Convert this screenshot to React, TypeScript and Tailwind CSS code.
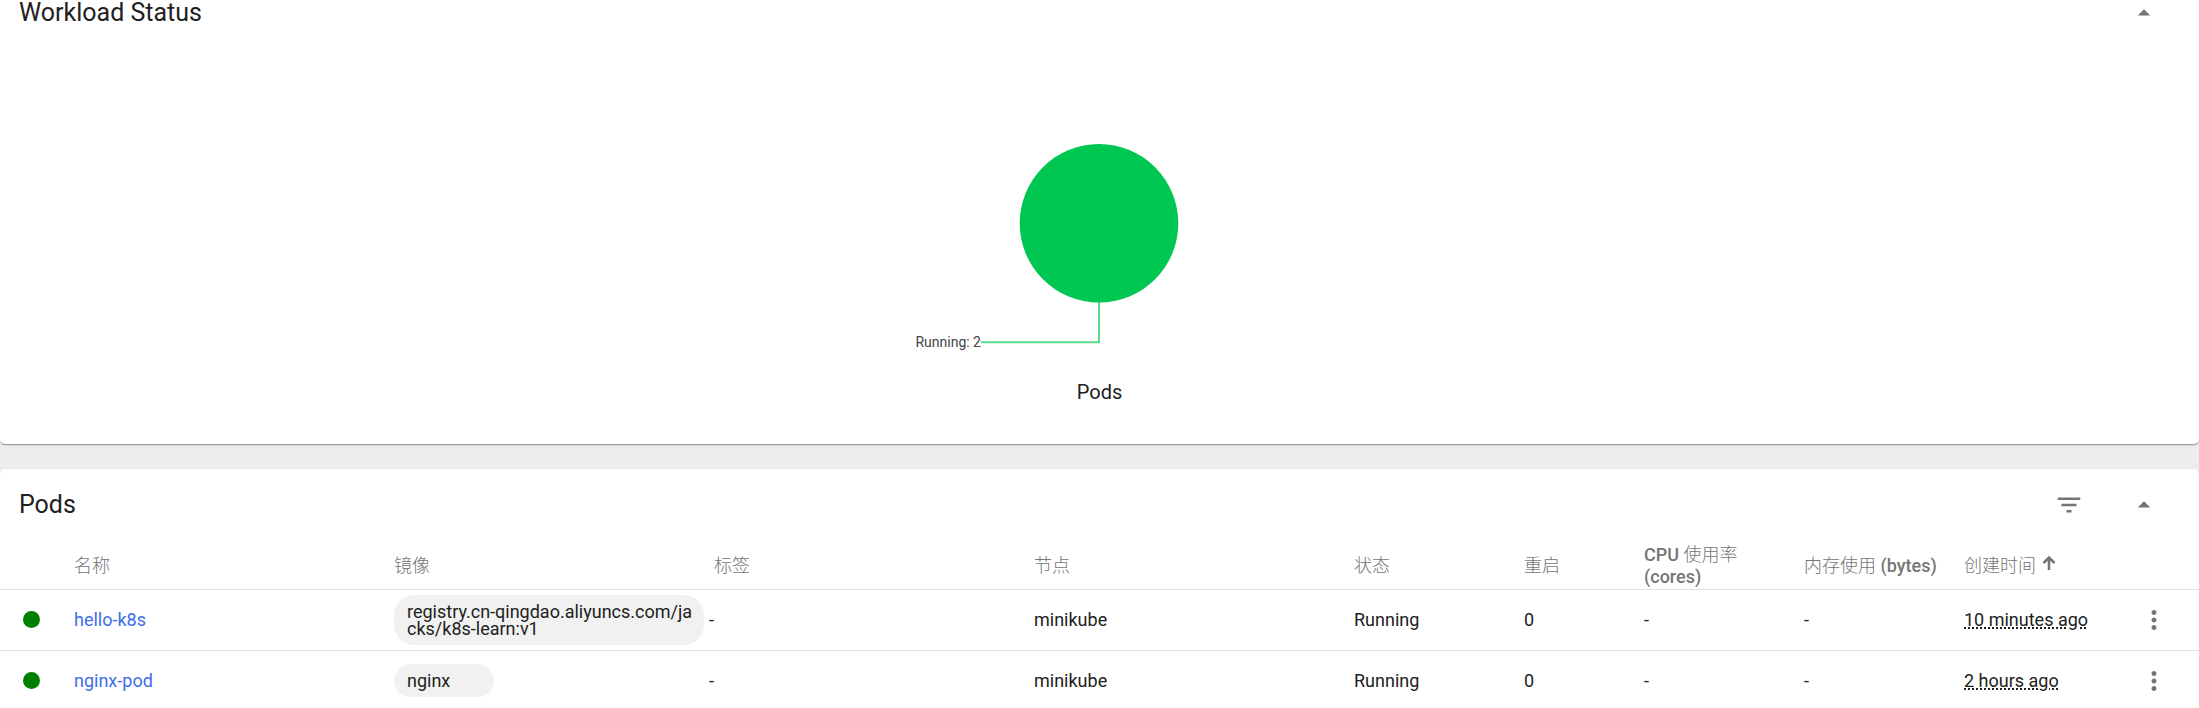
import { ReactNode } from 'react';

const ICONS = {
  up: 'M7 14l5-5 5 5z',
  filter: 'M10 18h4v-2h-4v2zM3 6v2h18V6H3zm3 7h12v-2H6v2z',
  more: 'M12 8c1.1 0 2-.9 2-2s-.9-2-2-2-2 .9-2 2 .9 2 2 2zm0 2c-1.1 0-2 .9-2 2s.9 2 2 2 2-.9 2-2-.9-2-2-2zm0 6c-1.1 0-2 .9-2 2s.9 2 2 2 2-.9 2-2-.9-2-2-2z',
};

function IconButton({ icon, label }: { icon: keyof typeof ICONS; label: string }) {
  return (
    <button type="button" aria-label={label} className="flex size-[30px] items-center justify-center text-[#757575]">
      <svg viewBox="0 0 24 24" className="size-[30px]" fill="currentColor">
        <path d={ICONS[icon]} />
      </svg>
    </button>
  );
}

function Card({ children, className }: { children: ReactNode; className: string }) {
  return (
    <section
      className={`bg-white shadow-[0_2px_1px_-1px_rgba(0,0,0,0.2),0_1px_1px_0_rgba(0,0,0,0.14),0_1px_3px_0_rgba(0,0,0,0.12)] ${className}`}
    >
      {children}
    </section>
  );
}

const Cjk = ({ children }: { children: ReactNode }) => <span className="font-light">{children}</span>;

const pods = [
  { name: 'hello-k8s', image: 'registry.cn-qingdao.aliyuncs.com/jacks/k8s-learn:v1', created: '10 minutes ago' },
  { name: 'nginx-pod', image: 'nginx', created: '2 hours ago' },
];

function PodTable() {
  return (
    <table className="w-full table-fixed text-left text-[18px] leading-[22px]">
      <colgroup>
        <col className="w-[74px]" />
        <col />
        <col />
        <col />
        <col />
        <col className="w-[170px]" />
        <col className="w-[120px]" />
        <col className="w-[160px]" />
        <col className="w-[160px]" />
        <col className="w-[160px]" />
        <col className="w-[75px]" />
      </colgroup>
      <thead>
        <tr className="h-[49px] border-b border-[#e0e0e0] text-[#757575] [&>th]:px-0 [&>th]:pt-[3px] [&>th]:pb-0 [&>th]:font-medium">
          <th />
          <th><Cjk>名称</Cjk></th>
          <th><Cjk>镜像</Cjk></th>
          <th><Cjk>标签</Cjk></th>
          <th><Cjk>节点</Cjk></th>
          <th><Cjk>状态</Cjk></th>
          <th><Cjk>重启</Cjk></th>
          <th><span className="block w-[110px]">CPU <Cjk>使用率</Cjk> (cores)</span></th>
          <th className="whitespace-nowrap"><Cjk>内存使用</Cjk> (bytes)</th>
          <th>
            <button type="button" className="flex items-center gap-1.5">
              <Cjk>创建时间</Cjk>
              <svg viewBox="0 0 14 16" className="-mt-1.5 h-4 w-[14px]" fill="none" stroke="currentColor" strokeWidth="2.6">
                <path d="M7 15V2M1.5 8L7 2.5L12.5 8" />
              </svg>
            </button>
          </th>
          <th />
        </tr>
      </thead>
      <tbody>
        {pods.map((pod) => (
          <tr key={pod.name} className="h-[61px] border-b border-[#e0e0e0] [&>td]:p-0">
            <td>
              <span className="ml-[23px] block size-[17px] rounded-full bg-[#008000]" />
            </td>
            <td>
              <a href="#" className="text-[#3b6ee8]">{pod.name}</a>
            </td>
            <td className="align-middle">
              <span className="mr-[10px] block w-fit min-w-[100px] rounded-[20px] bg-[#f1f1f1] py-2 pr-2 pl-[13px] leading-[17px] break-all">
                {pod.image}
              </span>
            </td>
            <td><span className="-ml-[5px]">-</span></td>
            <td>minikube</td>
            <td>Running</td>
            <td>0</td>
            <td>-</td>
            <td>-</td>
            <td className="whitespace-nowrap">
              <span className="underline decoration-dotted decoration-2 underline-offset-2">{pod.created}</span>
            </td>
            <td>
              <div className="ml-[15px]">
                <IconButton icon="more" label="Actions" />
              </div>
            </td>
          </tr>
        ))}
      </tbody>
    </table>
  );
}

export default function App() {
  return (
    <main className="flex h-screen flex-col overflow-hidden bg-[#ecedef] font-['Roboto','Noto_Sans_CJK_SC',sans-serif] text-[#212121]">
      <Card className="shrink-0 rounded-b-[5px] pb-[40px]">
        <header className="flex h-[25px] items-center justify-between pr-10 pl-[19px]">
          <h2 className="text-[25px] leading-[25px]">Workload Status</h2>
          <IconButton icon="up" label="Collapse workload status" />
        </header>
        <figure className="flex flex-col items-center pt-[69px]">
          <svg viewBox="0 0 500 280" className="h-[280px] w-[500px]">
            <circle cx="249" cy="129.3" r="79.3" fill="#00c752" />
            <path d="M249 208V248.3H131" fill="none" stroke="#00c752" strokeOpacity="0.65" strokeWidth="2" />
            <text x="131" y="253" textAnchor="end" fontSize="14" fill="#444">Running: 2</text>
          </svg>
          <figcaption className="mt-1.5 text-[20px] leading-6">Pods</figcaption>
        </figure>
      </Card>
      <Card className="mt-[25px] shrink-0 rounded-t-[5px]">
        <header className="flex h-[71px] items-center justify-between pr-10 pl-[19px]">
          <h2 className="text-[25px] leading-[25px]">Pods</h2>
          <div className="flex gap-[45px]">
            <IconButton icon="filter" label="Filter" />
            <IconButton icon="up" label="Collapse pods" />
          </div>
        </header>
        <PodTable />
      </Card>
    </main>
  );
}
